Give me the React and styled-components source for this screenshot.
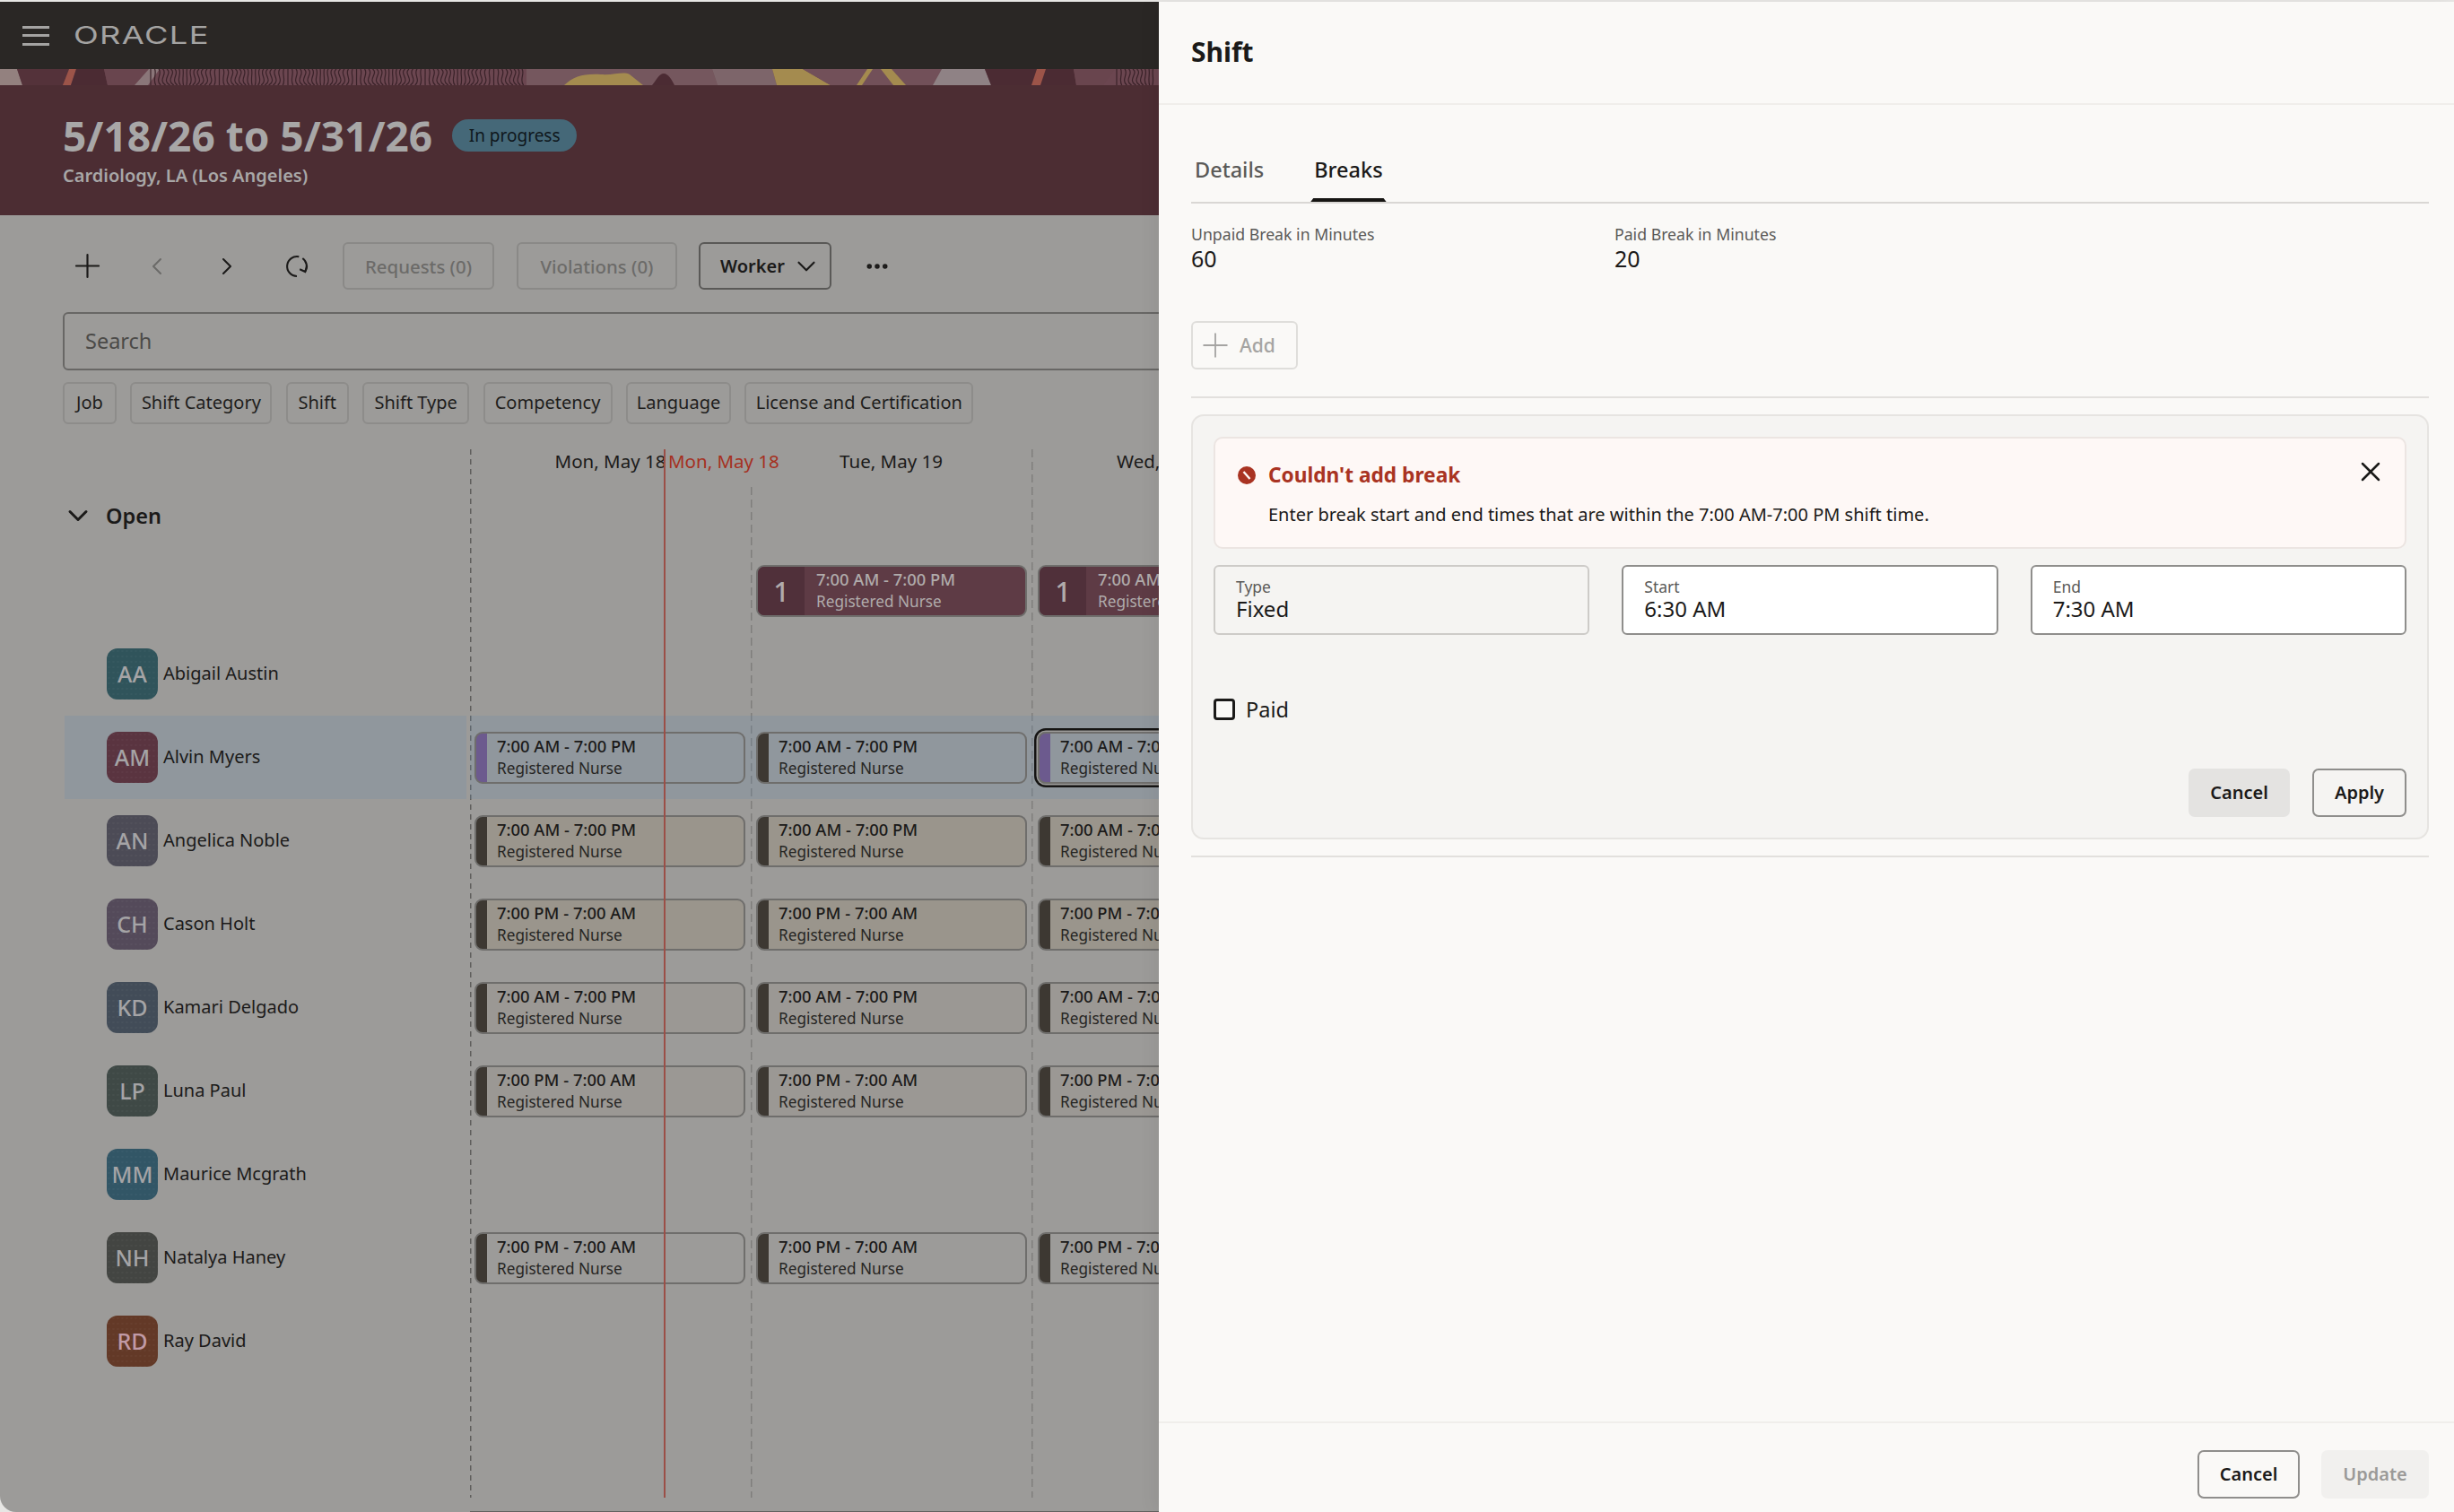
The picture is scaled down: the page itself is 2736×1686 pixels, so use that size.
import React from 'react';
import styled, { createGlobalStyle } from 'styled-components';
import { ChevronDown, ChevronLeft, ChevronRight, Ellipsis, Plus, X } from 'lucide-react';

const GlobalStyle = createGlobalStyle`
  html, body {
    margin: 0;
    padding: 0;
    background: #e7e6e4;
  }
  * {
    box-sizing: border-box;
  }
  body {
    font-family: "Noto Sans", "Open Sans", sans-serif;
    color: #1b1a19;
  }
`;

const Page = styled.div`
  display: flex;
  width: 2736px;
  height: 1686px;
  padding-top: 2px;
  overflow: hidden;
`;

/* dimmed schedule behind the drawer */
const Schedule = styled.main`
  display: flex;
  flex-direction: column;
  width: 1292px;
  flex: none;
  overflow: hidden;
  background: #9c9b99;
  border-bottom-left-radius: 18px;
`;

const NavBar = styled.header`
  display: flex;
  align-items: center;
  flex: none;
  height: 75px;
  padding-left: 25px;
  gap: 27px;
  background: #2a2725;
`;

const Burger = styled.span`
  display: block;
  width: 30px;
  height: 22px;
  border-top: 3px solid #a4a3a2;
  border-bottom: 3px solid #a4a3a2;
  position: relative;
  &::after {
    content: '';
    position: absolute;
    left: 0;
    right: 0;
    top: 6.5px;
    height: 3px;
    background: #a4a3a2;
  }
`;

const Logo = styled.span`
  display: block;
  font-family: "Inter", sans-serif;
  font-size: 27px;
  font-weight: 400;
  line-height: 30px;
  letter-spacing: 1px;
  color: #a4a3a2;
  transform: scaleX(1.345);
  transform-origin: left center;
`;

const Band = styled.svg`
  display: block;
  flex: none;
  width: 1292px;
  height: 18px;
`;

const Hero = styled.section`
  flex: none;
  height: 145px;
  padding: 32px 0 0 70px;
  background: #4c2d33;
  color: #a8a7a7;
`;

const HeroRow = styled.div`
  display: flex;
  align-items: center;
  gap: 22px;
  height: 48px;
`;

const HeroTitle = styled.h1`
  margin: 0;
  font-size: 46px;
  line-height: 48px;
  font-weight: 700;
`;

const Badge = styled.span`
  display: flex;
  align-items: center;
  justify-content: center;
  width: 139px;
  height: 36px;
  padding-bottom: 1px;
  border-radius: 18px;
  background: #456878;
  color: #0f171c;
  font-size: 19px;
`;

const HeroSub = styled.div`
  margin-top: 6px;
  font-size: 20px;
  line-height: 30px;
  font-weight: 600;
`;

const Toolbar = styled.div`
  display: flex;
  align-items: center;
  flex: none;
  height: 53px;
  margin-top: 30px;
  padding-left: 58px;
`;

const IconButton = styled.span`
  display: flex;
  align-items: center;
  justify-content: center;
  width: 78px;
  height: 53px;
  color: ${props => (props.$muted ? '#6b6a68' : '#1b1a19')};
`;

const ToolButton = styled.span`
  display: flex;
  align-items: center;
  justify-content: center;
  flex: none;
  width: ${props => props.$width}px;
  height: 53px;
  margin-left: ${props => props.$gap}px;
  border: 2px solid #8a8987;
  border-radius: 6px;
  font-size: 20.4px;
  font-weight: 500;
  color: #6c6b69;
`;

const ViewButton = styled(ToolButton)`
  justify-content: flex-start;
  gap: 7px;
  padding-left: 22px;
  border-color: #5a5957;
  font-size: 20px;
  font-weight: 600;
  color: #1b1a19;
`;

const MoreButton = styled.span`
  display: flex;
  margin-left: 36px;
  color: #1b1a19;
`;

const SearchBox = styled.div`
  display: flex;
  align-items: center;
  flex: none;
  width: 1300px;
  height: 65px;
  margin: 25px 0 0 70px;
  padding: 0 0 2px 23px;
  border: 2px solid #686765;
  border-radius: 6px;
  font-size: 23.5px;
  color: #4b4a48;
`;

const ChipRow = styled.div`
  display: flex;
  flex: none;
  gap: 15.4px;
  margin: 13px 0 0 70px;
`;

const Chip = styled.span`
  display: flex;
  align-items: center;
  justify-content: center;
  width: ${props => props.$width}px;
  height: 47px;
  padding-bottom: 2px;
  border: 2px solid #8d8c8a;
  border-radius: 6px;
  font-size: 20px;
  color: #1e1d1c;
  white-space: nowrap;
`;

const Timeline = styled.div`
  display: flex;
  position: relative;
  flex: none;
  height: 1169px;
  margin-top: 28px;
`;

const NameColumn = styled.div`
  flex: none;
  width: 448px;
  margin: 0 4px 0 72px;
`;

const DayColumn = styled.div`
  flex: none;
  width: 313px;
  background: repeating-linear-gradient(
      to bottom,
      ${props => props.$line} 0 ${props => props.$dash}px,
      transparent ${props => props.$dash}px ${props => props.$dash + 5}px
    )
    left top / 1.5px 100% no-repeat;
`;

const DayHead = styled.div`
  height: 39px;
  line-height: 27px;
  font-size: 20.5px;
  text-align: center;
  white-space: nowrap;
`;

const OpenRow = styled.div`
  display: flex;
  align-items: center;
  gap: 13px;
  height: 72px;
  margin-left: -3px;
  padding-bottom: 2px;
  font-size: 23.5px;
  font-weight: 600;
`;

const OpenGap = styled.div`
  height: 72px;
`;

const Row = styled.div`
  display: flex;
  align-items: center;
  height: 93px;
  padding-left: ${props => props.$inset || 0}px;
  background: ${props => (props.$selected ? 'rgba(100, 140, 170, 0.214)' : 'transparent')};
`;

const WorkerRow = styled(Row)`
  gap: 6px;
  padding-left: 47px;
  font-size: 20px;
`;

const WorkerName = styled.span`
  padding-bottom: 3px;
`;

const Avatar = styled.span`
  display: flex;
  align-items: center;
  justify-content: center;
  flex: none;
  width: 57px;
  height: 57px;
  padding-bottom: 2px;
  border-radius: 12px;
  background-color: ${props => props.$tone};
  background-image: radial-gradient(rgba(255, 255, 255, 0.03) 1px, transparent 1.2px);
  background-size: 5px 6px;
  color: ${props => props.$ink || '#a5a4a6'};
  font-size: 25px;
  font-weight: 500;
`;

const ShiftCard = styled.div`
  display: flex;
  flex-direction: column;
  justify-content: center;
  flex: none;
  width: 302px;
  height: 58px;
  padding-left: 23px;
  border: 2px solid #6f6e6c;
  border-radius: 9px;
  background: linear-gradient(to right, ${props => props.$strip} 12px, ${props => props.$fill} 12px);
  ${props => props.$selected && 'box-shadow: 0 0 0 1.5px #9d9c9a, 0 0 0 4px #151413;'}
`;

const ShiftTime = styled.div`
  font-size: 18.4px;
  line-height: 23px;
  margin-bottom: 2px;
  font-weight: 500;
  color: #1b1a19;
  white-space: nowrap;
`;

const ShiftRole = styled.div`
  font-size: 17.2px;
  line-height: 24px;
  color: #262523;
  white-space: nowrap;
`;

const OpenCard = styled.div`
  display: flex;
  flex: none;
  width: 302px;
  height: 58px;
  border: 2px solid #6f6e6c;
  border-radius: 9px;
  overflow: hidden;
  background: #5e3b45;
  color: #b0abab;
`;

const OpenCount = styled.div`
  display: flex;
  align-items: center;
  justify-content: center;
  flex: none;
  width: 52px;
  background: #50303a;
  font-size: 31px;
  font-weight: 500;
`;

const OpenText = styled.div`
  display: flex;
  flex-direction: column;
  justify-content: center;
  padding-left: 13px;
  white-space: nowrap;
  font-size: 17.2px;
  line-height: 24px;
  & > div:first-child {
    margin-bottom: 2px;
    font-size: 18.4px;
    line-height: 23px;
    font-weight: 500;
  }
`;

const TodayLine = styled.div`
  position: absolute;
  left: 740px;
  top: 0;
  bottom: 0;
  width: 2px;
  background: #9b4f47;
`;

const TodayLabel = styled.div`
  position: absolute;
  left: 742px;
  top: 0;
  height: 39px;
  padding: 0 3px;
  line-height: 27px;
  font-size: 20.5px;
  white-space: nowrap;
  color: #a5301f;
  background: #9c9b99;
`;

const BottomRule = styled.div`
  flex: none;
  height: 1.5px;
  margin: auto 0 0 524px;
  background: #62615f;
`;

/* drawer */
const Drawer = styled.aside`
  display: flex;
  flex-direction: column;
  flex: 1;
  min-width: 0;
  position: relative;
  background: #faf9f7;
  box-shadow: -6px 0 18px rgba(0, 0, 0, 0.05);
`;

const DrawerHead = styled.div`
  flex: none;
  height: 115px;
  padding: 36px 0 0 36px;
  border-bottom: 2px solid #f0eeeb;
  font-size: 30px;
  line-height: 40px;
  font-weight: 700;
`;

const DrawerBody = styled.div`
  flex: 1;
  padding: 0 28px 0 36px;
`;

const Tabs = styled.div`
  display: flex;
  align-items: flex-end;
  gap: 48px;
  height: 110px;
  border-bottom: 2px solid #d9d7d4;
`;

const Tab = styled.div`
  position: relative;
  height: 53px;
  padding: 0 4px;
  font-size: 23.5px;
  line-height: 34px;
  font-weight: 500;
  color: ${props => (props.$active ? '#1b1a19' : '#5b5a58')};
  ${props =>
    props.$active &&
    `&::after {
      content: '';
      position: absolute;
      left: 0;
      right: 0;
      bottom: 0;
      height: 4px;
      background: #161513;
      clip-path: polygon(3px 0, calc(100% - 3px) 0, 100% 100%, 0 100%);
    }`}
`;

const Summary = styled.div`
  display: flex;
  margin-top: 23px;
`;

const SummaryItem = styled.div`
  width: 472px;
`;

const SummaryLabel = styled.div`
  font-size: 17.7px;
  line-height: 23px;
  color: #5b5a58;
`;

const SummaryValue = styled.div`
  font-size: 25px;
  line-height: 30px;
`;

const AddButton = styled.div`
  display: flex;
  align-items: center;
  gap: 5px;
  width: 119px;
  height: 54px;
  margin-top: 55px;
  padding-left: 3px;
  border: 2px solid #dfdedb;
  border-radius: 6px;
  font-size: 21px;
  font-weight: 500;
  color: #a5a4a2;
`;

const Rule = styled.div`
  height: 2px;
  background: #e2e0dd;
  margin: ${props => props.$top}px 0 ${props => props.$bottom}px;
`;

const BreakCard = styled.section`
  height: 474px;
  padding: 23px;
  border: 2px solid #e6e4e1;
  border-radius: 14px;
  background: #f5f4f2;
`;

const Alert = styled.div`
  position: relative;
  height: 125px;
  padding: 24px 0 0 25px;
  border: 2px solid #ece5e2;
  border-radius: 10px;
  background: #fef8f6;
`;

const AlertTitle = styled.div`
  display: flex;
  align-items: center;
  gap: 14px;
  font-size: 22.7px;
  line-height: 34px;
  font-weight: 700;
  color: #a93322;
`;

const AlertText = styled.div`
  margin: 12px 0 0 34px;
  font-size: 20px;
  line-height: 30px;
`;

const AlertClose = styled.span`
  position: absolute;
  right: 20px;
  top: 19px;
  display: flex;
`;

const Fields = styled.div`
  display: grid;
  grid-template-columns: repeat(3, 1fr);
  gap: 36px;
  margin-top: 18px;
`;

const Field = styled.div`
  height: 78px;
  padding: 12px 0 0 23px;
  border: 2px solid ${props => (props.$readonly ? '#cdcbc8' : '#8f8e8c')};
  border-radius: 6px;
  background: ${props => (props.$readonly ? '#f5f4f2' : '#ffffff')};
`;

const FieldLabel = styled.div`
  font-size: 17.5px;
  line-height: 20px;
  color: #5b5a58;
`;

const FieldValue = styled.div`
  font-size: 24px;
  line-height: 30px;
`;

const CheckRow = styled.label`
  display: flex;
  align-items: center;
  gap: 12px;
  height: 24px;
  margin-top: 71px;
  font-size: 23.5px;
`;

const CheckBox = styled.span`
  display: block;
  width: 24px;
  height: 24px;
  border: 3px solid #1b1a19;
  border-radius: 4px;
  background: #faf9f7;
`;

const Actions = styled.div`
  display: flex;
  justify-content: flex-end;
  gap: ${props => props.$gap}px;
  margin-top: ${props => props.$top || 0}px;
`;

const ActionButton = styled.span`
  display: flex;
  align-items: center;
  justify-content: center;
  width: ${props => props.$width}px;
  height: 54px;
  padding-bottom: 1px;
  border: 2px solid ${props => props.$border || 'transparent'};
  border-radius: 7px;
  background: ${props => props.$fill || 'transparent'};
  color: ${props => props.$ink || '#1b1a19'};
  font-size: 20px;
  font-weight: 600;
`;

const DrawerFoot = styled.div`
  flex: none;
  height: 101px;
  padding: 30px 28px 0 0;
  border-top: 2px solid #f0eeeb;
`;

const slabs = [
  ['#93817f', '0,0 19,0 25,18 0,18'],
  ['#54323a', '19,0 85,0 70,18 25,18'],
  ['#9c5449', '77,0 85,0 79,18 70,18'],
  ['#4b2b33', '85,0 116,0 120,18 79,18'],
  ['#69454e', '116,0 166,0 150,18 120,18'],
  ['#8a7679', '166,0 178,0 165,18 150,18'],
  ['#75575e', '587,0 794,0 800,18 587,18'],
  ['#7d656a', '794,0 861,0 866,18 800,18'],
  ['#a48b4f', '861,0 895,0 926,18 866,18'],
  ['#725059', '895,0 1050,0 1040,18 926,18'],
  ['#a48b4f', '967,0 973,0 961,18 955,18'],
  ['#a48b4f', '982,0 994,0 1010,18 996,18'],
  ['#8f8285', '1050,0 1098,0 1105,18 1040,18'],
  ['#4b2b33', '1098,0 1197,0 1200,18 1105,18'],
  ['#9c5449', '1156,0 1166,0 1160,18 1150,18'],
  ['#69454e', '1197,0 1243,0 1230,18 1200,18']
];

// wood grain lines of the banner, the same wave shifted along the strip
const grain = (from, to) =>
  Array.from({ length: Math.floor((to - from) / 4.5) }, (_, i) => {
    const x = from + i * 4.5;
    const bend = 7 * Math.sin(i * 0.37);
    return `M${x} 0C${x + bend} 5 ${x - bend} 12 ${x + bend / 2} 18`;
  }).join('');

const PatternBand = () => (
  <Band viewBox="0 0 1292 18" preserveAspectRatio="none">
    <rect width="1292" height="18" fill="#6b4650" />
    {slabs.map(([fill, points]) => (
      <polygon key={points} fill={fill} points={points} />
    ))}
    <path d="M629 18C640 8 650 5 670 6C685 7 695 2 702 6L717 18Z" fill="#a48b4f" />
    <path d="M727 18C732 12 735 5 740 5C745 5 749 12 752 18Z" fill="#4b2b33" />
    <path d={grain(168, 587)} fill="none" stroke="#3a2229" strokeWidth="1.2" />
    <path d={grain(1245, 1292)} fill="none" stroke="#3a2229" strokeWidth="1.2" />
  </Band>
);

const RefreshIcon = () => (
  <svg width="30" height="30" viewBox="0 0 26 26" fill="none" stroke="currentColor" strokeWidth="1.8">
    <path d="M15 3.7A9.5 9.5 0 1 0 13 22.5" />
    <path d="M18.5 5.2A9.5 9.5 0 0 1 21 18" />
    <path d="M22.8 12.5L21 18.2L15.8 15.8" />
  </svg>
);

const ErrorIcon = () => (
  <svg width="20" height="20" viewBox="0 0 20 20">
    <circle cx="10" cy="10" r="10" fill="#a93322" />
    <path d="M6.5 6l7 8" stroke="#fef8f6" strokeWidth="2.4" />
  </svg>
);

const NIGHT = '7:00 PM - 7:00 AM';
const DAY = '7:00 AM - 7:00 PM';
const SOFT = '#9a958c';
const PALE = '#9b9894';
const PLAIN = 'transparent';

const filters = [
  ['Job', 60],
  ['Shift Category', 158],
  ['Shift', 70],
  ['Shift Type', 119],
  ['Competency', 144],
  ['Language', 117],
  ['License and Certification', 255]
];

const workers = [
  { initials: 'AA', name: 'Abigail Austin', tone: '#30545b' },
  { initials: 'AM', name: 'Alvin Myers', tone: '#5a3440', time: DAY, fill: PLAIN, selected: true },
  { initials: 'AN', name: 'Angelica Noble', tone: '#4c4b56', time: DAY, fill: SOFT },
  { initials: 'CH', name: 'Cason Holt', tone: '#544a5a', time: NIGHT, fill: SOFT },
  { initials: 'KD', name: 'Kamari Delgado', tone: '#424c58', time: DAY, fill: PALE },
  { initials: 'LP', name: 'Luna Paul', tone: '#3f4946', time: NIGHT, fill: PALE },
  { initials: 'MM', name: 'Maurice Mcgrath', tone: '#325666' },
  { initials: 'NH', name: 'Natalya Haney', tone: '#434542', time: NIGHT, fill: PLAIN },
  { initials: 'RD', name: 'Ray David', tone: '#633927', ink: '#c09aa6' }
];

const days = [
  { label: 'Mon, May 18', inset: 5, line: '#5f5e5c', dash: 6, open: false, purple: true },
  { label: 'Tue, May 19', inset: 6, line: '#7f7e7c', dash: 9, open: true, purple: false },
  { label: 'Wed, May 20', inset: 7, line: '#7f7e7c', dash: 9, open: true, purple: true, focus: true }
];

const DayCells = ({ day }) => (
  <DayColumn $line={day.line} $dash={day.dash}>
    <DayHead>{day.label}</DayHead>
    <OpenGap />
    <Row $inset={day.inset}>
      {day.open && (
        <OpenCard>
          <OpenCount>1</OpenCount>
          <OpenText>
            <div>7:00 AM - 7:00 PM</div>
            <div>Registered Nurse</div>
          </OpenText>
        </OpenCard>
      )}
    </Row>
    {workers.map(worker => (
      <Row key={worker.name} $inset={day.inset} $selected={worker.selected}>
        {worker.time && (
          <ShiftCard
            $fill={worker.fill}
            $strip={worker.selected && day.purple ? '#6c5a8e' : '#3d3832'}
            $selected={worker.selected && day.focus}
          >
            <ShiftTime>{worker.time}</ShiftTime>
            <ShiftRole>Registered Nurse</ShiftRole>
          </ShiftCard>
        )}
      </Row>
    ))}
  </DayColumn>
);

export default function App() {
  return (
    <Page>
      <GlobalStyle />
      <Schedule>
        <NavBar>
          <Burger />
          <Logo>ORACLE</Logo>
        </NavBar>
        <PatternBand />
        <Hero>
          <HeroRow>
            <HeroTitle>5/18/26 to 5/31/26</HeroTitle>
            <Badge>In progress</Badge>
          </HeroRow>
          <HeroSub>Cardiology, LA (Los Angeles)</HeroSub>
        </Hero>
        <Toolbar>
          <IconButton><Plus size={43} strokeWidth={1.2} /></IconButton>
          <IconButton $muted><ChevronLeft size={32} strokeWidth={1.5} /></IconButton>
          <IconButton><ChevronRight size={32} strokeWidth={1.5} /></IconButton>
          <IconButton><RefreshIcon /></IconButton>
          <ToolButton $width={169} $gap={12}>Requests (0)</ToolButton>
          <ToolButton $width={179} $gap={25}>Violations (0)</ToolButton>
          <ViewButton $width={148} $gap={24}>
            Worker <ChevronDown size={34} strokeWidth={1.5} />
          </ViewButton>
          <MoreButton><Ellipsis size={30} strokeWidth={2.4} /></MoreButton>
        </Toolbar>
        <SearchBox>Search</SearchBox>
        <ChipRow>
          {filters.map(([label, width]) => (
            <Chip key={label} $width={width}>{label}</Chip>
          ))}
        </ChipRow>
        <Timeline>
          <NameColumn>
            <DayHead />
            <OpenRow>
              <ChevronDown size={36} strokeWidth={2} />
              Open
            </OpenRow>
            <Row />
            {workers.map(worker => (
              <WorkerRow key={worker.name} $selected={worker.selected}>
                <Avatar $tone={worker.tone} $ink={worker.ink}>{worker.initials}</Avatar>
                <WorkerName>{worker.name}</WorkerName>
              </WorkerRow>
            ))}
          </NameColumn>
          {days.map(day => (
            <DayCells key={day.label} day={day} />
          ))}
          <TodayLine />
          <TodayLabel>Mon, May 18</TodayLabel>
        </Timeline>
        <BottomRule />
      </Schedule>
      <Drawer>
        <DrawerHead>Shift</DrawerHead>
        <DrawerBody>
          <Tabs>
            <Tab>Details</Tab>
            <Tab $active>Breaks</Tab>
          </Tabs>
          <Summary>
            <SummaryItem>
              <SummaryLabel>Unpaid Break in Minutes</SummaryLabel>
              <SummaryValue>60</SummaryValue>
            </SummaryItem>
            <SummaryItem>
              <SummaryLabel>Paid Break in Minutes</SummaryLabel>
              <SummaryValue>20</SummaryValue>
            </SummaryItem>
          </Summary>
          <AddButton>
            <Plus size={44} strokeWidth={1} />
            Add
          </AddButton>
          <Rule $top={30} $bottom={18} />
          <BreakCard>
            <Alert>
              <AlertTitle>
                <ErrorIcon />
                Couldn't add break
              </AlertTitle>
              <AlertText>Enter break start and end times that are within the 7:00 AM-7:00 PM shift time.</AlertText>
              <AlertClose><X size={36} strokeWidth={1.7} /></AlertClose>
            </Alert>
            <Fields>
              <Field $readonly>
                <FieldLabel>Type</FieldLabel>
                <FieldValue>Fixed</FieldValue>
              </Field>
              <Field>
                <FieldLabel>Start</FieldLabel>
                <FieldValue>6:30 AM</FieldValue>
              </Field>
              <Field>
                <FieldLabel>End</FieldLabel>
                <FieldValue>7:30 AM</FieldValue>
              </Field>
            </Fields>
            <CheckRow>
              <CheckBox />
              Paid
            </CheckRow>
            <Actions $gap={25} $top={54}>
              <ActionButton $width={113} $fill="#e4e3e1">Cancel</ActionButton>
              <ActionButton $width={105} $border="#8f8e8c">Apply</ActionButton>
            </Actions>
          </BreakCard>
          <Rule $top={18} $bottom={0} />
        </DrawerBody>
        <DrawerFoot>
          <Actions $gap={24}>
            <ActionButton $width={114} $border="#8f8e8c">Cancel</ActionButton>
            <ActionButton $width={120} $fill="#f1f0ee" $ink="#9b9a98">Update</ActionButton>
          </Actions>
        </DrawerFoot>
      </Drawer>
    </Page>
  );
}
